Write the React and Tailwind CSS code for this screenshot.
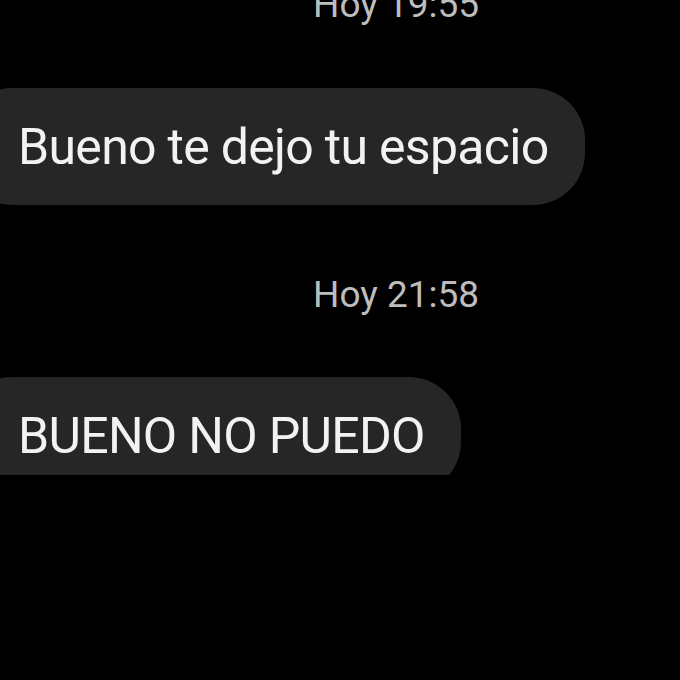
import React from 'react';

const font = { fontFamily: 'Roboto, "Noto Sans", sans-serif' };

function Stamp({ time, className = '' }) {
  return (
    <div className={`pl-[313px] text-[37px] leading-none text-[#bdbdbd] ${className}`}>
      Hoy {time}
    </div>
  );
}

function Bubble({ text, className = '' }) {
  return (
    <div className={`h-[117px] -ml-[40px] pl-[58px] pr-[36px] flex items-center rounded-[52px] bg-[#262626] text-[50px] leading-none tracking-[-0.7px] text-[#f2f2f2] w-fit ${className}`}>
      {text}
    </div>
  );
}

export default function App() {
  return (
    <div className="w-[680px] h-[680px] bg-black overflow-hidden" style={font}>
      <Stamp time="19:55" className="-mt-[14px]" />
      <Bubble text="Bueno te dejo tu espacio" className="mt-[65px]" />
      <Stamp time="21:58" className="mt-[71px]" />
      <div className="mt-[64px] h-[98px] overflow-hidden">
        <Bubble text="BUENO NO PUEDO" />
      </div>
    </div>
  );
}
